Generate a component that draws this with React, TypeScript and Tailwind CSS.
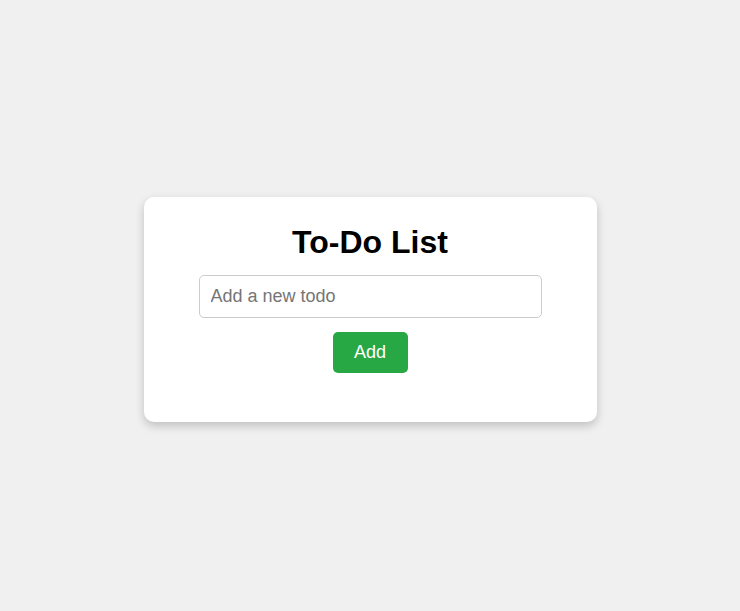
import { useState } from 'react';

export default function App() {
  const [todos, setTodos] = useState<string[]>([]);
  const [text, setText] = useState('');

  const addTodo = () => {
    if (!text.trim()) return;
    setTodos([...todos, text.trim()]);
    setText('');
  };

  return (
    <div
      className="min-h-screen w-full bg-[#f0f0f0] flex items-center justify-center"
      style={{ fontFamily: '"Liberation Sans", Arial, sans-serif' }}
    >
      <div className="mt-[8px] w-[453px] bg-white rounded-[10px] shadow-[0_4px_10px_rgba(0,0,0,0.2)] pt-[27px] pb-[49px] flex flex-col items-center">
        <h1 className="text-[32px] leading-[37px] font-bold text-black">To-Do List</h1>
        <input
          type="text"
          value={text}
          onChange={(e) => setText(e.target.value)}
          placeholder="Add a new todo"
          className="mt-[14px] w-[343px] h-[43px] px-[11px] border border-[#ccc] rounded-[5px] text-[18px] text-black placeholder:text-[#757575] outline-none"
        />
        <button
          onClick={addTodo}
          className="mt-[14px] w-[75px] h-[41px] bg-[#28a745] text-white text-[18px] rounded-[5px]"
        >
          Add
        </button>
        {todos.length > 0 && (
          <ul className="mt-4 w-[343px]">
            {todos.map((todo, index) => (
              <li key={index} className="py-2 border-b border-[#eee] text-[18px]">
                {todo}
              </li>
            ))}
          </ul>
        )}
      </div>
    </div>
  );
}
